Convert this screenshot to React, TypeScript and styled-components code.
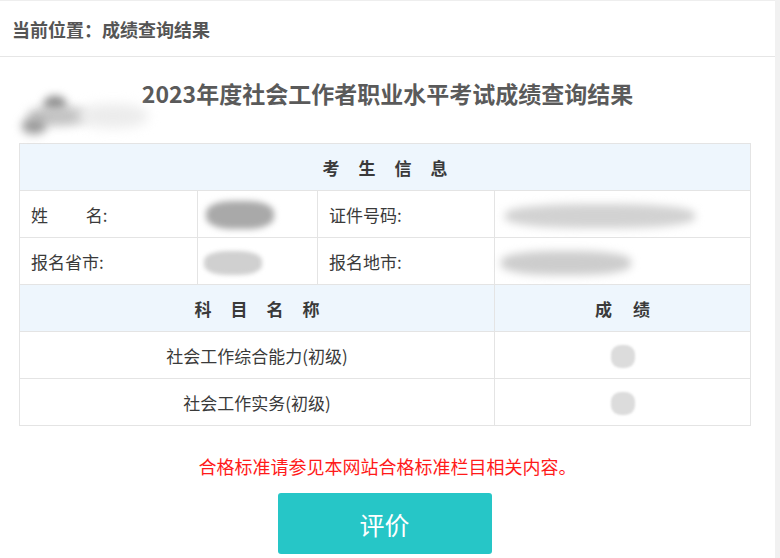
import React from "react";
import styled, { createGlobalStyle } from "styled-components";

const Global = createGlobalStyle`
  html, body { margin: 0; padding: 0; background: #f1f1f1; }
  body { font-family: "Noto Sans CJK SC", "Noto Sans", sans-serif; color: #333; }
`;

const Page = styled.div`
  width: 775px;
  height: 558px;
  background: #fff;
  overflow: hidden;
  position: relative;
`;

const Crumb = styled.div`
  height: 57px;
  border-top: 1px solid #eeeeee;
  border-bottom: 1px solid #e6e6e6;
  box-sizing: border-box;
  display: flex;
  align-items: center;
  padding-left: 12px;
  font-size: 18px;
  font-weight: 700;
  color: #555;
`;

const Title = styled.h1`
  margin: 0;
  padding-top: 21px;
  height: 86px;
  box-sizing: border-box;
  text-align: center;
  font-size: 23px;
  line-height: 30px;
  font-weight: 700;
  color: #5a5a5a;
`;

const Table = styled.table`
  margin-left: 19px;
  width: 731px;
  border-collapse: collapse;
  table-layout: fixed;
  font-size: 17px;
  color: #3a3a3a;
`;

const Cell = styled.td<{ $head?: boolean; $center?: boolean; $pad?: number }>`
  height: 47px;
  box-sizing: border-box;
  border: 1px solid #e4e4e4;
  padding: 0 0 0 ${(p) => (p.$pad ?? 11)}px;
  background: ${(p) => (p.$head ? "#eef6fd" : "#fff")};
  text-align: ${(p) => (p.$center || p.$head ? "center" : "left")};
  font-weight: ${(p) => (p.$head ? 700 : 400)};
  vertical-align: middle;
  white-space: nowrap;
`;

const Spaced = styled.span<{ $gap: number }>`
  display: inline-block;
  letter-spacing: ${(p) => p.$gap}px;
  margin-right: -${(p) => p.$gap}px;
`;

const Smudge = styled.span<{ $w: number; $h: number; $tone: string; $blur: number }>`
  display: inline-block;
  vertical-align: middle;
  width: ${(p) => p.$w}px;
  height: ${(p) => p.$h}px;
  background: ${(p) => p.$tone};
  filter: blur(${(p) => p.$blur}px);
  border-radius: 40%;
`;

const Cloud = styled.div`
  position: absolute;
  left: 18px;
  top: 92px;
  width: 140px;
  height: 50px;
  pointer-events: none;
`;

const Puff = styled.span<{ $x: number; $y: number; $w: number; $h: number; $tone: string; $blur: number }>`
  position: absolute;
  left: ${(p) => p.$x}px;
  top: ${(p) => p.$y}px;
  width: ${(p) => p.$w}px;
  height: ${(p) => p.$h}px;
  background: ${(p) => p.$tone};
  filter: blur(${(p) => p.$blur}px);
  border-radius: 45%;
`;

const Note = styled.p`
  margin: 29px 0 0;
  text-align: center;
  font-size: 18px;
  line-height: 22px;
  color: #ff1a1a;
`;

const Actions = styled.div`
  display: flex;
  justify-content: center;
  padding-top: 16px;
  padding-right: 6px;
`;

const Button = styled.button`
  width: 214px;
  height: 61px;
  border: none;
  border-radius: 3px;
  background: #26c6c7;
  color: #fff;
  font-family: "Noto Sans CJK SC", sans-serif;
  font-size: 25px;
  cursor: pointer;
`;

export default function App() {
  return (
    <>
      <Global />
      <Page>
        <Crumb>当前位置：成绩查询结果</Crumb>
        <Title>2023年度社会工作者职业水平考试成绩查询结果</Title>
        <Cloud>
          <Puff $x={26} $y={4} $w={22} $h={18} $tone="#8a8a8a" $blur={4} />
          <Puff $x={10} $y={14} $w={60} $h={20} $tone="#c4c4c4" $blur={5} />
          <Puff $x={4} $y={26} $w={24} $h={16} $tone="#9a9a9a" $blur={5} />
          <Puff $x={60} $y={12} $w={70} $h={24} $tone="#ececec" $blur={6} />
        </Cloud>
        <Table>
          <colgroup>
            <col style={{ width: 178 }} />
            <col style={{ width: 120 }} />
            <col style={{ width: 177 }} />
            <col style={{ width: 256 }} />
          </colgroup>
          <tbody>
            <tr>
              <Cell $head colSpan={4} $pad={0}>
                <Spaced $gap={19}>考生信息</Spaced>
              </Cell>
            </tr>
            <tr>
              <Cell>姓　　&nbsp;名:</Cell>
              <Cell $pad={8}>
                <Smudge $w={68} $h={28} $tone="#a9a9a9" $blur={3} />
              </Cell>
              <Cell>证件号码:</Cell>
              <Cell $pad={10}>
                <Smudge $w={190} $h={24} $tone="#d2d2d2" $blur={4} />
              </Cell>
            </tr>
            <tr>
              <Cell>报名省市:</Cell>
              <Cell $pad={6}>
                <Smudge $w={58} $h={24} $tone="#d0d0d0" $blur={2} />
              </Cell>
              <Cell>报名地市:</Cell>
              <Cell $pad={6}>
                <Smudge $w={130} $h={24} $tone="#cdcdcd" $blur={4} />
              </Cell>
            </tr>
            <tr>
              <Cell $head colSpan={3} $pad={0}>
                <Spaced $gap={19}>科目名称</Spaced>
              </Cell>
              <Cell $head $pad={0}>
                <Spaced $gap={21}>成绩</Spaced>
              </Cell>
            </tr>
            <tr>
              <Cell $center colSpan={3} $pad={0}>社会工作综合能力(初级)</Cell>
              <Cell $center $pad={0}>
                <Smudge $w={24} $h={23} $tone="#dcdcdc" $blur={1} />
              </Cell>
            </tr>
            <tr>
              <Cell $center colSpan={3} $pad={0}>社会工作实务(初级)</Cell>
              <Cell $center $pad={0}>
                <Smudge $w={24} $h={23} $tone="#dcdcdc" $blur={1} />
              </Cell>
            </tr>
          </tbody>
        </Table>
        <Note>合格标准请参见本网站合格标准栏目相关内容。</Note>
        <Actions>
          <Button>评价</Button>
        </Actions>
      </Page>
    </>
  );
}
